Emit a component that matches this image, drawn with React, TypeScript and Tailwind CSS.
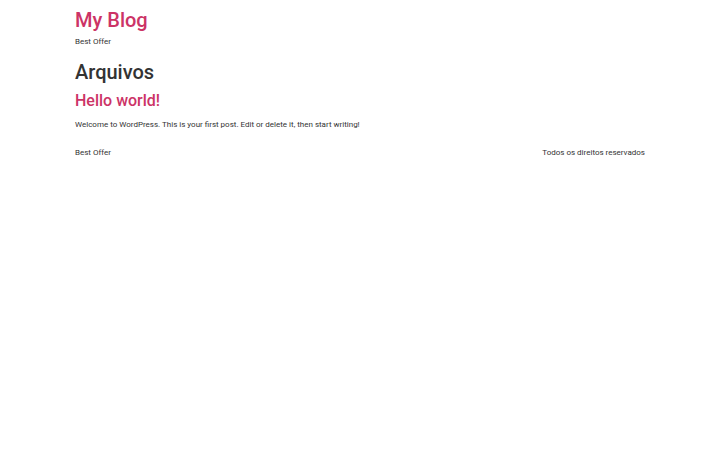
export default function App() {
  return (
    <div className="min-h-[450px] bg-white text-[#333]" style={{ fontFamily: 'Roboto, "Liberation Sans", sans-serif' }}>
      <div className="mx-auto w-[570px]">
        <header className="pt-[8px]">
          <h1 className="text-[20px] leading-[24px] font-medium text-[#cc3366]">My Blog</h1>
          <p className="mt-[4px] text-[8px] leading-[12px]">Best Offer</p>
        </header>
        <main className="mt-[12px]">
          <h1 className="text-[20px] leading-[24px] font-medium text-[#333]">Arquivos</h1>
          <h2 className="mt-[7.4px] text-[16px] leading-[19.2px] font-medium text-[#cc3366]">Hello world!</h2>
          <p className="mt-[8.4px] text-[8px] leading-[12px]">Welcome to WordPress. This is your first post. Edit or delete it, then start writing!</p>
        </main>
        <footer className="mt-[16px] flex justify-between text-[8px] leading-[12px]">
          <span>Best Offer</span>
          <span>Todos os direitos reservados</span>
        </footer>
      </div>
    </div>
  );
}
